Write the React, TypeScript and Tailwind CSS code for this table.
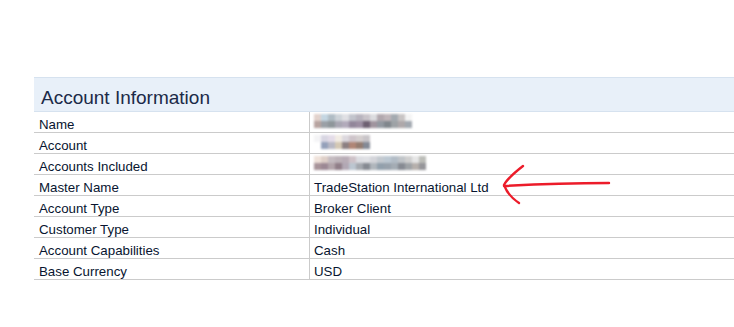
import React from "react";

const rows: { label: string; value?: string; blur?: string[][] }[] = [
  {
    label: "Name",
    blur: [
      ["#e2d2cc", "#c4d6e2", "#b0bcc4", "#cdd3d8", "#e0e0e4", "#c2c4cc", "#b8b4be", "#c9c4ca", "#dcdcdf", "#b2a8ae", "#c0b6ba", "#a4aab0", "#c8c4c4", "#f4f4f4"],
      ["#b8a4a0", "#9aa0a6", "#8e969a", "#a8a6b2", "#b2aabb", "#92869a", "#9c8ea2", "#6e6072", "#a0949e", "#9298a0", "#80868c", "#9ea2a6", "#aea8aa", "#a2a8b0"],
    ],
  },
  {
    label: "Account",
    blur: [
      ["#f4f4f6", "#d8d6e2", "#e4dce8", "#f2ece4", "#dcd8de", "#cec4ca", "#d4cece", "#c8c4c8"],
      ["#ffffff", "#94a0ba", "#b8b8c4", "#d4c8b4", "#8c8082", "#b08676", "#947c70", "#848a96"],
    ],
  },
  {
    label: "Accounts Included",
    blur: [
      ["#efe2da", "#decfc8", "#c4bbc0", "#bcb2b8", "#b8acb6", "#cec2c8", "#dcdde2", "#dfe0e4", "#d4d5da", "#c4cad0", "#bcc8d2", "#b2bcc6", "#c0c4c8", "#cfcfcf", "#e6e6e6", "#bcbdb8"],
      ["#a8949a", "#9c8894", "#b2a4aa", "#907e88", "#b2a8b4", "#bcc6d0", "#a4a8ae", "#868a92", "#b0b6bc", "#92a0ac", "#98a2ac", "#a4acb4", "#868a92", "#9ea2a6", "#b6b0ac", "#96969a"],
    ],
  },
  { label: "Master Name", value: "TradeStation International Ltd" },
  { label: "Account Type", value: "Broker Client" },
  { label: "Customer Type", value: "Individual" },
  { label: "Account Capabilities", value: "Cash" },
  { label: "Base Currency", value: "USD" },
];

function Mosaic({ cells }: { cells: string[][] }) {
  return (
    <div className="flex flex-col blur-[0.8px] mt-[-4px]">
      {cells.map((r, i) => (
        <div key={i} className="flex">
          {r.map((c, j) => (
            <div key={j} className="w-[7px] h-[7px]" style={{ backgroundColor: c }} />
          ))}
        </div>
      ))}
    </div>
  );
}

export default function App() {
  return (
    <div
      className="relative w-[734px] h-[327px] bg-white overflow-hidden pt-[77px] pl-[34px]"
      style={{ fontFamily: '"Liberation Sans", Arial, sans-serif' }}
    >
      <div className="w-[700px]">
        <div className="h-[35px] bg-[#e8f0f9] border-t border-b border-[#d6e2ef] pl-[7px] pt-[10px]">
          <div className="text-[19px] leading-[19px] text-[#1b2a48]">Account Information</div>
        </div>
        {rows.map((r) => (
          <div key={r.label} className="flex h-[21px] border-b border-[#cbcbcb] text-[13.3px] leading-[13px] text-[#081530]">
            <div className="w-[276px] shrink-0 border-r border-[#cbcbcb] pl-[5px] pt-[6px]">{r.label}</div>
            <div className="pl-[4px] pt-[6px]">{r.blur ? <Mosaic cells={r.blur} /> : r.value}</div>
          </div>
        ))}
      </div>
      <svg className="absolute left-0 top-0" width="734" height="327" viewBox="0 0 734 327" fill="none">
        <path d="M609 183 C 570 183, 540 184, 504 186" stroke="#ec1c2a" strokeWidth="2.4" strokeLinecap="round" />
        <path d="M523 166 C 514 173, 507 179, 504 185 C 507 193, 513 199, 519 203" stroke="#ec1c2a" strokeWidth="2.4" strokeLinecap="round" />
      </svg>
    </div>
  );
}
